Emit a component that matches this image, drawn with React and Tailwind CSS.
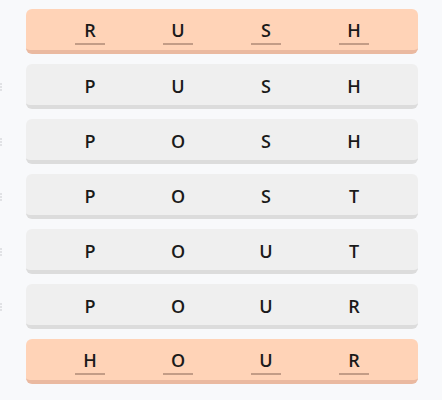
import React from "react";

const rows = [
  { letters: ["R", "U", "S", "H"], hl: true },
  { letters: ["P", "U", "S", "H"] },
  { letters: ["P", "O", "S", "H"] },
  { letters: ["P", "O", "S", "T"] },
  { letters: ["P", "O", "U", "T"] },
  { letters: ["P", "O", "U", "R"] },
  { letters: ["H", "O", "U", "R"], hl: true },
];

function Grip() {
  return (
    <svg width="3" height="8" viewBox="0 0 3 8" className="block">
      <rect x="0" y="0.5" width="2" height="1" fill="#c9ccd0" />
      <rect x="0" y="3.5" width="2" height="1" fill="#c9ccd0" />
      <rect x="0" y="6.5" width="2" height="1" fill="#c9ccd0" />
    </svg>
  );
}

export default function App() {
  return (
    <div
      className="w-[442px] h-[400px] bg-[#f8f9fb] pt-[9px] flex flex-col gap-[10px]"
      style={{ fontFamily: '"Open Sans", "Noto Sans", sans-serif' }}
    >
      {rows.map((r, i) => (
        <div key={i} className="flex items-center">
          <div className="w-[26px] h-[45px] flex items-center">
            {!r.hl && <Grip />}
          </div>
          <div
            className={
              r.hl
                ? "w-[392px] h-[45px] rounded-[6px] bg-[#ffd3b7] border-b-4 border-[#eab9a0] grid grid-cols-4 px-[20px] pt-[9px] items-start"
                : "w-[392px] h-[45px] rounded-[6px] bg-[#efefef] border-b-4 border-[#dcdcdc] grid grid-cols-4 px-[20px] pt-[10px] items-start"
            }
          >
            {r.letters.map((l, j) => (
              <div key={j} className="flex justify-center">
                <span
                  className={
                    r.hl
                      ? "block w-[30px] text-center text-[18px] leading-[25px] font-semibold text-[#1a1a1a] border-b-2 border-[#c39c86]"
                      : "block w-[30px] text-center text-[18px] leading-[25px] font-semibold text-[#1a1a1a]"
                  }
                >
                  {l}
                </span>
              </div>
            ))}
          </div>
        </div>
      ))}
    </div>
  );
}
